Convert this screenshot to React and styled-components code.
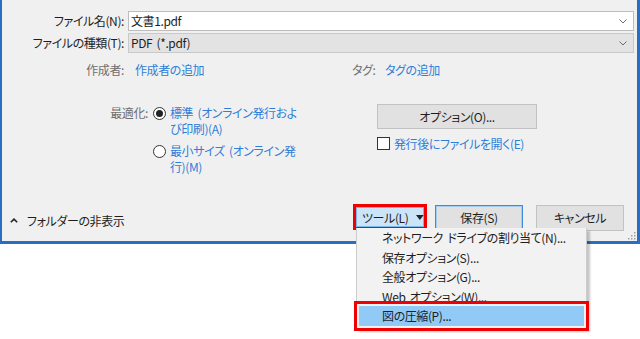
import React from 'react';
import styled, { createGlobalStyle } from 'styled-components';

const BLUE_FRAME = '#2a6fbf';
const LINK = '#2f7ed8';
const MUTED = '#6e6e6e';
const TEXT = '#1e1e1e';
const MARK = '#f00000';

const GlobalStyle = createGlobalStyle`
  html, body {
    margin: 0;
    padding: 0;
    background: #ffffff;
  }
  body {
    font-family: "Noto Sans CJK JP", "Noto Sans", sans-serif;
    font-feature-settings: "palt" 1;
    font-size: 12px;
    letter-spacing: -0.4px;
    word-spacing: 2px;
    color: ${TEXT};
  }
`;

const Page = styled.div`
  position: relative;
  width: 640px;
  height: 339px;
  overflow: hidden;
`;

const Dialog = styled.div`
  box-sizing: border-box;
  width: 640px;
  height: 244px;
  background: #f0f0f0;
  border-left: 2px solid ${BLUE_FRAME};
  border-right: 3px solid ${BLUE_FRAME};
  border-bottom: 3px solid ${BLUE_FRAME};
  display: flex;
  flex-direction: column;
`;

const Fields = styled.div`
  display: grid;
  grid-template-columns: 122px 1fr;
  column-gap: 4px;
  row-gap: 2px;
  align-items: center;
  padding: 11px 3px 0 0;
`;

const FieldLabel = styled.div`
  text-align: right;
  line-height: 16px;
  color: ${TEXT};
  white-space: nowrap;
`;

const Combo = styled.div`
  box-sizing: border-box;
  height: 20px;
  display: flex;
  align-items: center;
  justify-content: space-between;
  padding: 0 6px 0 2px;
  border: 1px solid ${p => (p.$readonly ? '#c9c9c9' : '#bdbdbd')};
  background: ${p => (p.$readonly ? '#e3e3e3' : '#ffffff')};
  line-height: 16px;
`;

const MetaRow = styled.div`
  display: grid;
  grid-template-columns: 122px 206px 22px 1fr;
  column-gap: 11px;
  margin-top: 9px;
  line-height: 16px;
`;

const MetaLabel = styled.span`
  text-align: right;
  color: ${MUTED};
  white-space: nowrap;
`;

const Link = styled.span`
  color: ${LINK};
  white-space: nowrap;
`;

const OptimizeArea = styled.div`
  display: flex;
  margin-top: 26px;
`;

const OptimizeLeft = styled.div`
  display: flex;
  width: 375px;
  padding-top: 1px;
`;

const OptimizeLabel = styled.div`
  width: 146px;
  text-align: right;
  line-height: 16px;
  color: ${MUTED};
`;

const RadioList = styled.div`
  display: flex;
  flex-direction: column;
  gap: 6px;
  margin-left: 5px;
`;

const RadioOption = styled.div`
  display: flex;
  align-items: flex-start;
  gap: 4px;
`;

const RadioCircle = styled.span`
  box-sizing: border-box;
  width: 13px;
  height: 13px;
  margin-top: 1.5px;
  border: 1px solid #333333;
  border-radius: 50%;
  background: #ffffff;
  display: flex;
  align-items: center;
  justify-content: center;
  flex-shrink: 0;

  &::after {
    content: '';
    width: 7px;
    height: 7px;
    border-radius: 50%;
    background: #222222;
    display: ${p => (p.$checked ? 'block' : 'none')};
  }
`;

const OptionText = styled.span`
  color: ${LINK};
  line-height: 16px;
  white-space: nowrap;
`;

const OptimizeRight = styled.div`
  display: flex;
  flex-direction: column;
`;

const Button = styled.button`
  box-sizing: border-box;
  height: ${p => p.$h || 26}px;
  width: ${p => p.$w}px;
  margin-right: ${p => p.$gap || 0}px;
  padding: 0;
  font: inherit;
  letter-spacing: inherit;
  word-spacing: inherit;
  font-feature-settings: "palt" 1;
  color: ${TEXT};
  background: #e1e1e1;
  border: 1px solid ${p => (p.$default ? '#3c8be0' : '#c2c2c2')};
  box-shadow: ${p => (p.$default ? 'inset 0 0 0 1px #a8cdf2' : 'none')};
  display: flex;
  align-items: center;
  justify-content: center;
`;

const CheckRow = styled.div`
  display: flex;
  align-items: center;
  gap: 4px;
  margin-top: 8px;
  line-height: 13px;
`;

const CheckBox = styled.span`
  box-sizing: border-box;
  width: 13px;
  height: 13px;
  border: 1px solid #333333;
  background: #ffffff;
`;

const Footer = styled.div`
  position: relative;
  margin-top: auto;
  display: flex;
  align-items: center;
  padding: 0 13px 10px 8px;
`;

const FolderToggle = styled.div`
  display: flex;
  align-items: center;
  gap: 9px;
  margin-top: 6px;
  line-height: 16px;
  color: ${TEXT};
`;

const Spacer = styled.div`
  flex: 1;
`;

const ToolsButton = styled.div`
  box-sizing: border-box;
  width: 74px;
  height: 26px;
  margin: 0 8px 1px 0;
  border: 3px solid ${MARK};
  background: #cce4f7;
  box-shadow: inset 0 0 0 1px #7fb6e8;
  display: flex;
  align-items: center;
  padding-left: 6px;
  gap: 8px;
  white-space: nowrap;
`;

const Menu = styled.div`
  position: absolute;
  left: 356px;
  top: 228px;
  z-index: 2;
  box-sizing: border-box;
  width: 231px;
  padding: 0 2px 2px;
  background: #f2f2f2;
  border: 1px solid #cccccc;
  border-top: none;
  box-shadow: 3px 3px 2px rgba(0, 0, 0, 0.22);
`;

const MenuItem = styled.div`
  height: 19.5px;
  display: flex;
  align-items: center;
  padding-left: 23px;
  white-space: pre;
  color: ${TEXT};
  background: ${p => (p.$active ? '#91c9f7' : 'transparent')};
  outline: ${p => (p.$active ? `3px solid ${MARK}` : 'none')};
  outline-offset: 2px;
`;

const Grip = styled.svg`
  position: absolute;
  right: 1px;
  bottom: 1px;
`;

const Chevron = () => (
  <svg width="8" height="5" viewBox="0 0 8 5">
    <polyline points="0.5,0.5 4,4 7.5,0.5" fill="none" stroke="#6b6b6b" strokeWidth="1" />
  </svg>
);

const menuItems = [
  'ネットワーク ドライブの割り当て(N)...',
  '保存オプション(S)...',
  '全般オプション(G)...',
  'Web オプション(W)...',
  '図の圧縮(P)...',
];

export default function App() {
  return (
    <Page>
      <GlobalStyle />
      <Dialog>
        <Fields>
          <FieldLabel>ファイル名(N):</FieldLabel>
          <Combo>
            <span>文書1.pdf</span>
            <Chevron />
          </Combo>
          <FieldLabel>ファイルの種類(T):</FieldLabel>
          <Combo $readonly>
            <span>PDF (*.pdf)</span>
            <Chevron />
          </Combo>
        </Fields>

        <MetaRow>
          <MetaLabel>作成者:</MetaLabel>
          <Link>作成者の追加</Link>
          <MetaLabel>タグ:</MetaLabel>
          <Link>タグの追加</Link>
        </MetaRow>

        <OptimizeArea>
          <OptimizeLeft>
            <OptimizeLabel>最適化:</OptimizeLabel>
            <RadioList>
              <RadioOption>
                <RadioCircle $checked />
                <OptionText>
                  標準 (オンライン発行およ
                  <br />
                  び印刷)(A)
                </OptionText>
              </RadioOption>
              <RadioOption>
                <RadioCircle />
                <OptionText>
                  最小サイズ (オンライン発
                  <br />
                  行)(M)
                </OptionText>
              </RadioOption>
            </RadioList>
          </OptimizeLeft>
          <OptimizeRight>
            <Button $w={160} $h={25}>オプション(O)...</Button>
            <CheckRow>
              <CheckBox />
              <Link>発行後にファイルを開く(E)</Link>
            </CheckRow>
          </OptimizeRight>
        </OptimizeArea>

        <Footer>
          <FolderToggle>
            <svg width="8" height="5" viewBox="0 0 8 5">
              <polyline points="0.8,4.3 4,1.2 7.2,4.3" fill="none" stroke="#222" strokeWidth="1.6" />
            </svg>
            <span>フォルダーの非表示</span>
          </FolderToggle>
          <Spacer />
          <ToolsButton>
            <span>ツール(L)</span>
            <svg width="8" height="5" viewBox="0 0 8 5">
              <polygon points="0,0 8,0 4,5" fill="#222" />
            </svg>
          </ToolsButton>
          <Button $w={88} $gap={13} $default>保存(S)</Button>
          <Button $w={88}>キャンセル</Button>
          <Grip width="9" height="9" viewBox="0 0 9 9">
            {[[7, 1], [4, 4], [7, 4], [1, 7], [4, 7], [7, 7]].map(([x, y]) => (
              <rect key={`${x}-${y}`} x={x} y={y} width="1.5" height="1.5" fill="#a0a0a0" />
            ))}
          </Grip>
        </Footer>
      </Dialog>

      <Menu>
        {menuItems.map((label, i) => (
          <MenuItem key={label} $active={i === menuItems.length - 1}>
            {label}
          </MenuItem>
        ))}
      </Menu>
    </Page>
  );
}
